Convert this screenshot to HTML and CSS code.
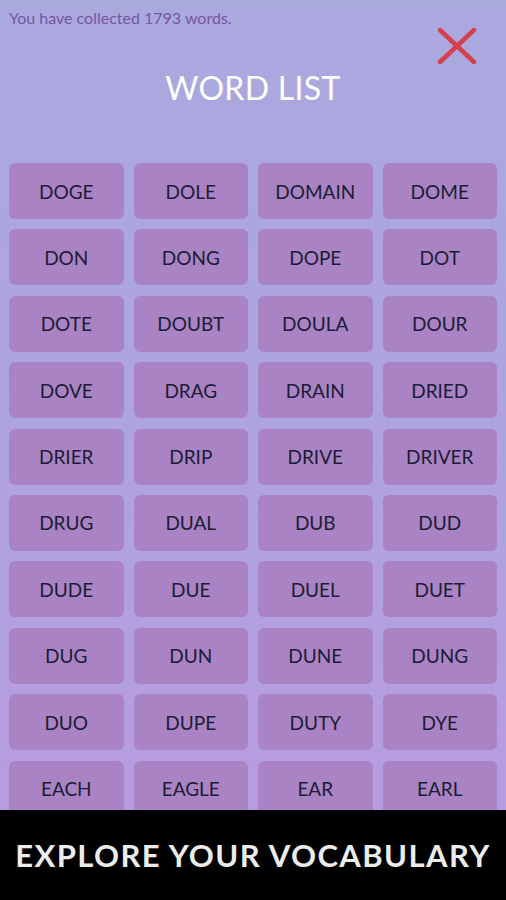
FILE: index.html
```html
<!DOCTYPE html>
<html lang="en">
<head>
    <meta charset="UTF-8">
    <meta name="viewport" content="width=device-width, initial-scale=1.0">
    <title>Word List</title>
    <link rel="stylesheet" href="styles.css">
</head>
<body>
    <div class="screen">
        <div class="top-bar">
            <p class="count">You have collected 1793 words.</p>
            <button class="close" aria-label="Close">
                <svg width="40" height="36" viewBox="0 0 40 36">
                    <path d="M3 2 L37 34 M37 2 L3 34" stroke="#d6404e" stroke-width="4.5" stroke-linecap="round"/>
                </svg>
            </button>
        </div>

        <h1>WORD LIST</h1>

        <div class="word-grid">
            <div class="word">DOGE</div>
            <div class="word">DOLE</div>
            <div class="word">DOMAIN</div>
            <div class="word">DOME</div>
            <div class="word">DON</div>
            <div class="word">DONG</div>
            <div class="word">DOPE</div>
            <div class="word">DOT</div>
            <div class="word">DOTE</div>
            <div class="word">DOUBT</div>
            <div class="word">DOULA</div>
            <div class="word">DOUR</div>
            <div class="word">DOVE</div>
            <div class="word">DRAG</div>
            <div class="word">DRAIN</div>
            <div class="word">DRIED</div>
            <div class="word">DRIER</div>
            <div class="word">DRIP</div>
            <div class="word">DRIVE</div>
            <div class="word">DRIVER</div>
            <div class="word">DRUG</div>
            <div class="word">DUAL</div>
            <div class="word">DUB</div>
            <div class="word">DUD</div>
            <div class="word">DUDE</div>
            <div class="word">DUE</div>
            <div class="word">DUEL</div>
            <div class="word">DUET</div>
            <div class="word">DUG</div>
            <div class="word">DUN</div>
            <div class="word">DUNE</div>
            <div class="word">DUNG</div>
            <div class="word">DUO</div>
            <div class="word">DUPE</div>
            <div class="word">DUTY</div>
            <div class="word">DYE</div>
            <div class="word">EACH</div>
            <div class="word">EAGLE</div>
            <div class="word">EAR</div>
            <div class="word">EARL</div>
        </div>
    </div>

    <div class="banner">EXPLORE YOUR VOCABULARY</div>
</body>
</html>
```

FILE: styles.css
```css
html, body {
    margin: 0;
    padding: 0;
    height: 100%;
}
body {
    font-family: 'Lato', 'Noto Sans', sans-serif;
    background: linear-gradient(180deg, #aaa9de 0%, #aea3df 50%, #b99ae1 100%);
    overflow: hidden;
}
.screen {
    padding: 0 9px;
}
.top-bar {
    display: flex;
    justify-content: space-between;
    align-items: flex-start;
    height: 64px;
}
.count {
    margin: 8px 0 0 0;
    font-size: 16px;
    color: #7556a2;
}
.close {
    background: none;
    border: none;
    padding: 0;
    margin: 28px 20px 0 0;
    cursor: pointer;
    line-height: 0;
}
h1 {
    margin: 0;
    height: 99px;
    text-align: center;
    color: #fff;
    font-size: 32px;
    font-weight: 400;
    letter-spacing: 0.3px;
    line-height: 48px;
}
.word-grid {
    display: grid;
    grid-template-columns: repeat(4, 1fr);
    grid-auto-rows: 56px;
    gap: 10.4px 10px;
}
.word {
    display: flex;
    align-items: center;
    justify-content: center;
    background: #a983c3;
    border-radius: 6px;
    color: #1c1d36;
    font-size: 19px;
}
.banner {
    position: fixed;
    left: 0;
    right: 0;
    bottom: 0;
    height: 90px;
    background: #000;
    color: #ececec;
    display: flex;
    align-items: center;
    justify-content: center;
    font-size: 31px;
    font-weight: 700;
    letter-spacing: 1.4px;
}
```
